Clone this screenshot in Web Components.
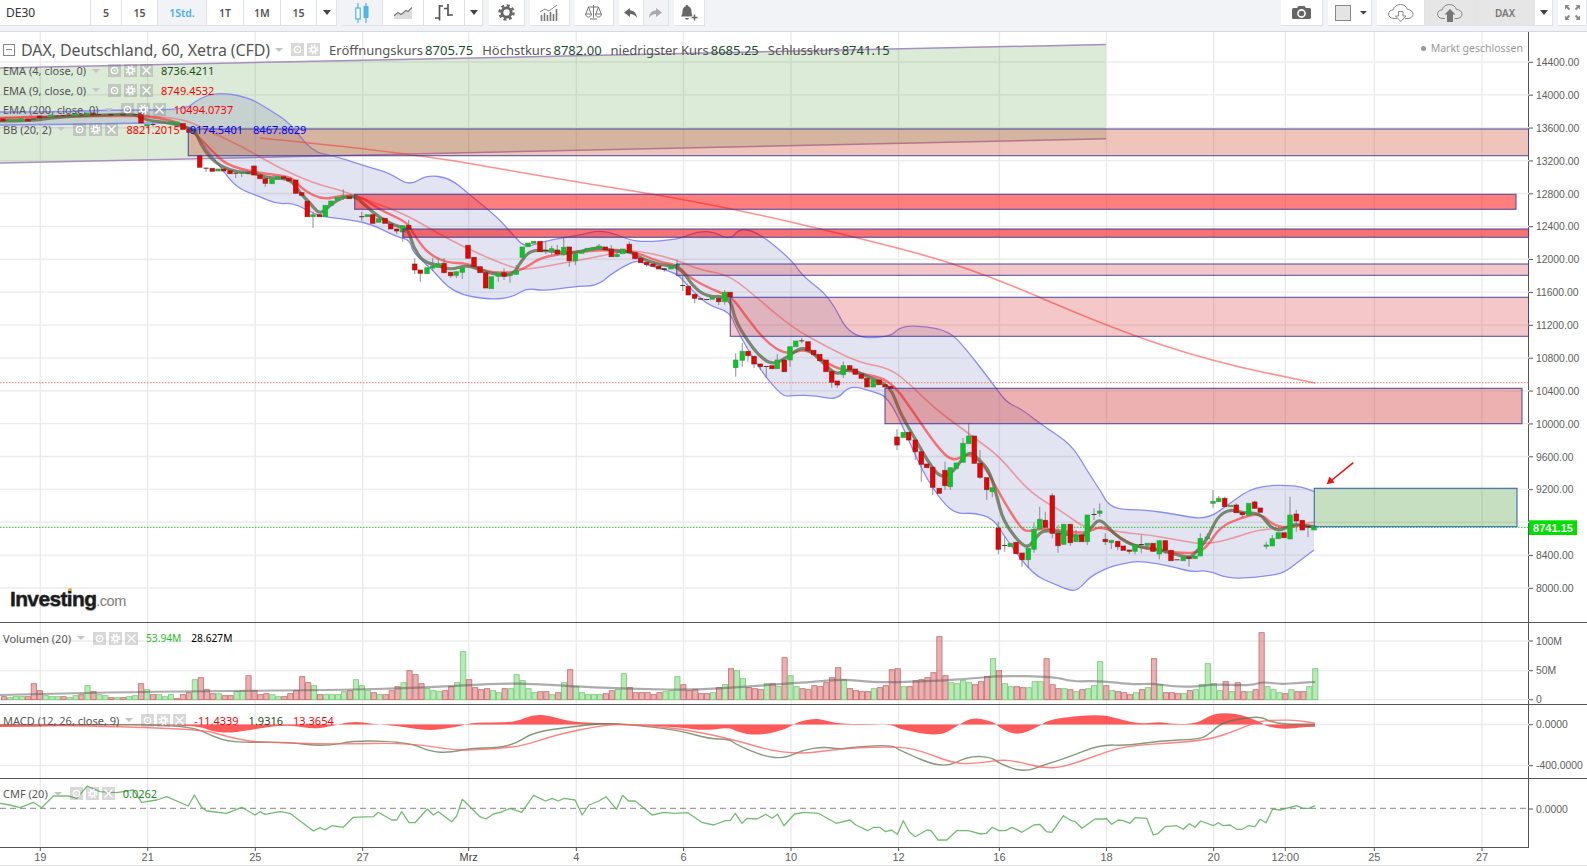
<!DOCTYPE html>
<html lang="de">
<head>
<meta charset="utf-8">
<title>DAX Chart</title>
<style>
  html, body { margin: 0; padding: 0; background: #fff; overflow: hidden; }
  body { width: 1587px; height: 866px; font-family: "Noto Sans", "DejaVu Sans", sans-serif; }
  svg.i { display: block; }
</style>
</head>
<body>
<chart-app>
  <chart-toolbar>
    <tool-group>
      <tool-btn style="--w:91px;--align:flex-start;--pad:0 0 0 6px;--fw:400;--fs:12px;--col:#333">DE30</tool-btn>
      <tool-btn style="--w:31px">5</tool-btn>
      <tool-btn style="--w:36px">15</tool-btn>
      <tool-btn style="--w:49px;--col:#45b0e8;--bg:#f1f3f6">1Std.</tool-btn>
      <tool-btn style="--w:37px">1T</tool-btn>
      <tool-btn style="--w:37px">1M</tool-btn>
      <tool-btn style="--w:36px">15</tool-btn>
      <tool-btn style="--w:20px"><svg class="i" width="8" height="5" viewBox="0 0 8 5"><path d="M0 0h8L4 5z" fill="#444"/></svg></tool-btn>
    </tool-group>
    <tool-group>
      <tool-btn style="--w:41px;--bg:#f1f3f6"><svg class="i" width="14" height="20" viewBox="0 0 14 20"><path d="M3 0v5M3 16v4M11 0v3M11 15v5" stroke="#4db5e8" stroke-width="1.2"/><rect x=".8" y="5" width="4.4" height="11" fill="#fff" stroke="#4db5e8" stroke-width="1.2"/><rect x="8.5" y="3" width="5" height="12" fill="#4db5e8"/></svg></tool-btn>
      <tool-btn style="--w:41px"><svg class="i" width="18" height="12" viewBox="0 0 18 12"><path d="M0 10 4 6l3 2 5-4 2 1 4-4v11H0z" fill="#dcdcdc"/><path d="M0 9 4 5.5l3 2 5-4 2 1 4-4" fill="none" stroke="#777" stroke-width="1.2"/></svg></tool-btn>
      <tool-btn style="--w:41px"><svg class="i" width="18" height="17" viewBox="0 0 18 17"><path d="M4.5 1v15.5M0 14h4.5M4.5 2H8M13 0v12M9 4.5h4M13 11h5" fill="none" stroke="#555" stroke-width="1.7"/></svg></tool-btn>
      <tool-btn style="--w:18px"><svg class="i" width="8" height="5" viewBox="0 0 8 5"><path d="M0 0h8L4 5z" fill="#444"/></svg></tool-btn>
    </tool-group>
    <tool-group style="--gap:5.5px">
      <tool-btn style="--w:36px"><svg class="i" width="17" height="17" viewBox="0 0 17 17"><circle cx="8.5" cy="8.5" r="4.6" fill="none" stroke="#666" stroke-width="2.8"/><circle cx="8.5" cy="8.5" r="7" fill="none" stroke="#666" stroke-width="2.5" stroke-dasharray="2.9 2.6"/></svg></tool-btn>
    </tool-group>
    <tool-group>
      <tool-btn style="--w:40px"><svg class="i" width="18" height="16" viewBox="0 0 18 16"><path d="M1.5 16V10M4.5 16V8M7.5 16V10M10.5 16V7M13.5 16V9M16.5 16V4" stroke="#777" stroke-width="1.6"/><path d="M0 7l5-3 4 2 8-6" fill="none" stroke="#888" stroke-width="1"/></svg></tool-btn>
    </tool-group>
    <tool-group>
      <tool-btn style="--w:39px"><svg class="i" width="17" height="15" viewBox="0 0 17 15"><path d="M8.5 0v13M5 14h7M3.5 2h10M3.5 2 .8 9M3.5 2 6.2 9M13.5 2l-2.7 7M13.5 2l2.7 7M.5 9c.5 4 5.5 4 6 0zM10.5 9c.5 4 5.5 4 6 0z" fill="none" stroke="#777" stroke-width="1"/></svg></tool-btn>
    </tool-group>
    <tool-group>
      <tool-btn style="--w:25px"><svg class="i" width="13" height="10" viewBox="0 0 13 10"><path d="M6 0 0 4.5 6 9V6c3 0 5 1 7 4-.5-5-3-7.5-7-7.5z" fill="#666"/></svg></tool-btn>
      <tool-btn style="--w:25px;--bg:#f1f3f6"><svg class="i" width="13" height="10" viewBox="0 0 13 10"><path d="M7 0l6 4.5L7 9V6c-3 0-5 1-7 4 .5-5 3-7.5 7-7.5z" fill="#aaa"/></svg></tool-btn>
    </tool-group>
    <tool-group style="--gap:5.5px">
      <tool-btn style="--w:31px"><svg class="i" width="17" height="16" viewBox="0 0 17 16"><path d="M6 0c.9 0 1.3.6 1.3 1.3C9.5 2 10.5 4 10.5 6.5c0 2 .5 3.5 1.5 5H0c1-1.5 1.5-3 1.5-5C1.5 4 2.5 2 4.7 1.3 4.7.6 5.1 0 6 0zM4 13h4C7.500 15 4.500 15 4 13z" fill="#666"/><path d="M13.500 9.500v6M10.500 12.500h6" stroke="#fff" stroke-width="3.400"/><path d="M13.500 9.500v6M10.500 12.500h6" stroke="#666" stroke-width="1.500"/></svg></tool-btn>
    </tool-group>

    <tool-group style="margin-left:auto">
      <tool-btn style="--w:42px"><svg class="i" width="19" height="13" viewBox="0 0 19 13"><path d="M1.500 2H5L6.500 0h6L14 2h3.500A1.500 1.500 0 0 1 19 3.500v8A1.500 1.500 0 0 1 17.500 13h-16A1.500 1.500 0 0 1 0 11.500v-8A1.500 1.500 0 0 1 1.500 2z" fill="#666"/><circle cx="9.5" cy="7.5" r="3.600" fill="none" stroke="#fff" stroke-width="1.600"/></svg></tool-btn>
    </tool-group>
    <tool-group>
      <tool-btn style="--w:44.5px;--align:flex-start;--pad:0 0 0 7px"><svg class="i" width="34" height="16" viewBox="0 0 34 16"><rect x=".5" y=".5" width="15" height="15" fill="#e4e4e4" stroke="#888"/><path d="M25 6h7l-3.500 3.500z" fill="#444"/></svg></tool-btn>
    </tool-group>
    <tool-group>
      <tool-btn style="--w:47.5px"><svg class="i" width="26" height="18" viewBox="0 0 26 18"><path d="M6 14.500C2.500 14.500 .5 12.500.5 10s2-4 4.500-4C6 2.500 9 .5 12.500.5c3.500 0 6 2 7 5 3 0 5.500 2 5.500 4.500s-2 4.500-5 4.500h-3M9 14.500H6" fill="none" stroke="#888" stroke-width="1"/><path d="M10.500 7.500h4.500v4.500H18l-5.200 5.500L7.500 12h3z" fill="#fff" stroke="#888" stroke-width="1"/></svg></tool-btn>
      <tool-btn style="--w:51.5px;--bg:#e6e6e6"><svg class="i" width="26" height="18" viewBox="0 0 26 18"><path d="M8 14.500H6C2.500 14.500.5 12.500.5 10s2-4 4.500-4C6 2.500 9 .5 12.500.5c3.500 0 6 2 7 5 3 0 5.500 2 5.500 4.500s-2 4.500-5 4.500h-2.500" fill="none" stroke="#888" stroke-width="1"/><path d="M13 5l5.500 5.500H16V18H10v-7.500H7.500z" fill="#777"/></svg></tool-btn>
      <tool-btn style="--w:58.5px;--bg:#e6e6e6;--col:#777;--fs:10px">DAX</tool-btn>
      <tool-btn style="--w:18.5px"><svg class="i" width="8" height="5" viewBox="0 0 8 5"><path d="M0 0h8L4 5z" fill="#444"/></svg></tool-btn>
    </tool-group>
    <tool-group>
      <tool-btn style="--w:28.7px"><svg class="i" width="17" height="17" viewBox="0 0 17 17"><path d="M1 1h4.500L4 2.500 6.200 4.700 4.700 6.200 2.500 4 1 5.500zM16 1v4.500L14.500 4l-2.200 2.200-1.500-1.500L13 2.500 11.500 1zM1 16v-4.500L2.500 13l2.200-2.200 1.500 1.500L4 14.500 5.500 16zM16 16h-4.500l1.500-1.500-2.200-2.200 1.500-1.500 2.200 2.200 1.500-1.500z" fill="#8a8a8a"/></svg></tool-btn>
    </tool-group>
  </chart-toolbar>

  <chart-pane kind="main" top="32" h="590">
    <div slot="legend">
      <legend-title icons="2" name="DAX, Deutschland, 60, Xetra (CFD)">
        <span>Eröffnungskurs<b>8705.75</b></span>
        <span>Höchstkurs<b>8782.00</b></span>
        <span>niedrigster Kurs<b>8685.25</b></span>
        <span>Schlusskurs<b>8741.15</b></span>
      </legend-title>
      <legend-row name="EMA (4, close, 0)"><legend-val c="#1d4d16">8736.4211</legend-val></legend-row>
      <legend-row name="EMA (9, close, 0)"><legend-val c="#f00">8749.4532</legend-val></legend-row>
      <legend-row name="EMA (200, close, 0)"><legend-val c="#f00">10494.0737</legend-val></legend-row>
      <legend-row name="BB (20, 2)"><legend-val c="#f00">8821.2015</legend-val><legend-val c="#00f">9174.5401</legend-val><legend-val c="#00f">8467.8629</legend-val></legend-row>
    </div>
    <market-status slot="status">Markt geschlossen</market-status>
    <site-logo slot="logo"></site-logo>
  </chart-pane>

  <chart-pane kind="volume" top="622" h="82" rule>
    <div slot="legend"><legend-row name="Volumen (20)" style="--rt:6.5px"><legend-val c="#1fc01f" style="font-size:10.2px">53.94M</legend-val><legend-val c="#000" style="font-size:10.2px">28.627M</legend-val></legend-row></div>
  </chart-pane>
  <chart-pane kind="macd" top="704" h="74" rule>
    <div slot="legend"><legend-row name="MACD (12, 26, close, 9)" style="--rt:6.5px"><legend-val c="#f00">-11.4339</legend-val><legend-val c="#1d4d16">1.9316</legend-val><legend-val c="#f00">13.3654</legend-val></legend-row></div>
  </chart-pane>
  <chart-pane kind="cmf" top="778" h="69" rule>
    <div slot="legend"><legend-row name="CMF (20)" style="--rt:6px"><legend-val c="#1b8a1b">0.0262</legend-val></legend-row></div>
  </chart-pane>
  <time-axis></time-axis>
</chart-app>

<script>
// x positions of the vertical grid, and their labels on the time axis
const GRID = [[40.3,'19'],[147.7,'21'],[255.3,'25'],[362.7,'27'],[468.7,'Mrz'],[576.3,'4'],[683.5,'6'],[791,'10'],[898.6,'12'],[999.4,'16'],[1106.5,'18'],[1213.7,'20'],[1285.3,'12:00'],[1374.3,'25'],[1482,'27']];
const PLOT_W = 1529;

// candles: x, body top, body bottom, wick top, wick bottom, colour (all in page pixels)
const CANDLES = [
[3,119,121,0,0,'r'],[9,119.5,121,0,0,'g'],[15,119.5,120.5,0,0,'g'],[21,118.7,120.7,0,0,'g'],[28,119,121,0,0,'r'],[33.5,118.5,119.5,0,0,'d'],[39.5,116,118,0,0,'r'],[45,116.5,117.5,0,0,'d'],[51,115,117,0,0,'g'],[57,115.5,116.5,0,0,'d'],[63,115,116,0,0,'d'],[69,114.5,115.5,0,0,'d'],[75,113.5,115.5,0,0,'g'],[81,114.5,115,0,0,'d'],[87,113,115,0,0,'g'],[93,113,115,0,0,'r'],[99,114,115,0,0,'d'],[111,114,115.5,0,0,'d'],[123,114,115.5,0,0,'d'],[135,114,115,0,0,'d'],[141,113,123,0,0,'r'],[147,124.5,126,0,0,'g'],[153,124,125,122,127,'d'],[171,121.5,123.5,0,0,'g'],[177,122,124,0,0,'g'],[183,123.5,129.5,0,0,'r'],[189,129.5,132.5,0,0,'r'],[195,130,133,0,0,'g'],
[199.7,155.7,167.3,0,0,'r'],[206,167.7,168.3,0,172,'d'],[212.3,168.3,171.3,0,0,'r'],[218,169,171,0,0,'g'],[223.7,169,171,0,0,'r'],[230,170.7,173.7,0,0,'r'],[235.7,172.7,173.3,0,178,'d'],[241.7,172.7,173.3,0,177,'g'],[248,172.5,173.3,0,0,'d'],[254,166,175,0,0,'r'],[260,175,178.7,0,0,'r'],[265.3,178.7,183.3,0,186.7,'r'],[272,179.3,183.7,0,0,'g'],[277.7,176.7,179.3,0,0,'g'],[283.7,176.7,178.7,0,0,'r'],[289,178.3,181,0,0,'r'],[295.7,180,193.3,0,0,'r'],[301.7,192.7,195.3,0,0,'r'],[307.3,201.3,216.7,0,0,'r'],[313,214.7,216.7,211.7,228,'g'],[319.3,214.7,216.7,0,0,'r'],[325.3,205.3,216.7,0,0,'g'],[331,201,205.3,0,0,'g'],[337.3,197.3,200,0,0,'g'],[343.3,196.3,198,189.3,200,'g'],[349.3,196.7,198.7,0,0,'r'],[355,195.3,197.3,0,0,'g'],[361.7,216.2,217,211.7,220.7,'d'],[367.3,214.7,216.7,0,0,'g'],[372.7,214.7,223.3,0,0,'r'],[378.7,218.7,222.3,0,0,'g'],[385,218.3,223.3,0,0,'r'],[390.7,224,229,0,0,'r'],[396.7,229,231,0,234,'r'],[402.7,225.7,232,0,241.7,'g'],[408.7,225.3,229,220,0,'r'],
[414.7,264,270,258.3,274,'r'],[420.3,270,273.3,0,281.7,'r'],[427,267.7,273.7,0,0,'g'],[432.7,266,268,258,271,'g'],[438.3,263.7,267.3,258,0,'g'],[444,263.3,272.7,258,0,'r'],[450.7,272.3,275.7,0,278,'r'],[456.3,271.7,275.3,0,278,'g'],[462.3,268,272.3,0,279,'g'],[468,245.3,258.3,0,0,'r'],[474,257.3,266.7,0,268.3,'r'],[480,266.7,272.7,0,0,'r'],[485.7,272.7,288,0,0,'r'],[491.3,276.7,288.7,0,0,'g'],[498.3,273,276.3,0,281.7,'g'],[504,272.7,276.3,268.3,280,'r'],[510,274,275.7,0,282.7,'g'],[516.3,270.7,274.3,265,0,'g'],[522.3,247,257.3,0,0,'g'],[528,243,246.7,0,0,'g'],[533.7,241.3,243.3,0,0,'g'],[540,241.3,251.7,0,0,'r'],[545.7,250,251,241.7,254,'d'],[551.7,248.7,251.7,245.7,255,'g'],[557.3,250,254,245,255.7,'r'],[563.7,247.3,254.7,237.7,255.7,'g'],[569.3,247,260.7,0,266.7,'r'],[575.3,253.7,260.7,0,265,'g'],[581.7,251,253.3,0,0,'g'],[587.3,248.3,251,0,0,'g'],[593.3,247.7,249.7,0,0,'g'],[599,246,248.3,244,0,'g'],[605.3,247,249.7,0,0,'r'],[611.3,249,256.7,245,0,'r'],[617,254.3,256.7,250,0,'g'],[622.7,249,253.7,0,0,'g'],[629.3,244.3,252.7,241.7,0,'r'],[635,252.7,258.7,0,0,'r'],[640.7,258.3,262.7,0,0,'r'],[646.7,262.3,264.7,0,266.7,'r'],[653,264,266.3,0,0,'r'],[658.7,266,269,0,0,'r'],[664.3,268.3,270,0,271.7,'d'],[671,266.3,269,0,0,'g'],[677,264.3,266.3,260,0,'g'],
[682.7,285,286,275,291,'d'],[688.3,286.3,295,0,0,'r'],[694.7,294.3,298.3,0,303.3,'r'],[700.7,298.3,299.7,0,0,'d'],[706.7,299,299.7,0,0,'d'],[712.3,297.3,299.3,0,0,'g'],[718.7,298.3,301.7,0,305,'r'],[724.7,292.3,301.7,290,304.7,'g'],[730,292.3,297,0,0,'r'],
[735.7,360,367.7,353.3,376.7,'g'],[742.3,351.3,360.3,343,366.7,'g'],[748,351.3,355.7,0,361.7,'r'],[754,356.3,364,0,368,'r'],[760.3,364,366.7,0,370,'r'],[766.3,366,366.7,0,378,'d'],[772,365.7,368.7,0,0,'r'],[777.3,360,368.7,354,0,'g'],[784.3,360,371.7,356.7,0,'r'],[790,346.7,360,0,366.7,'g'],[795.7,341,346.7,0,0,'g'],[801.7,340.3,341,338,343.3,'d'],[808,341.7,350.7,0,0,'r'],[813.7,350.3,354.7,0,0,'r'],[819.7,354.3,360.7,0,0,'r'],[826,360,371.7,0,0,'r'],[831.7,371.3,382.3,0,387.7,'r'],[837.3,381,385,0,388,'r'],[843.3,365.7,374.7,361.7,378,'g'],[849.7,365.7,369.7,0,0,'r'],[855.3,369,374.3,0,0,'r'],[861.3,374.3,378.3,0,0,'r'],[867,378.3,387,0,0,'r'],[873.3,380,387,0,0,'g'],[879,380,384.7,0,0,'r'],[885,384.7,387,0,0,'r'],[890.7,386.3,388.3,0,0,'r'],
[897,437,445,429.3,450,'r'],[903.3,432.3,437.7,0,0,'g'],[908.7,432.3,440,0,0,'r'],[915.3,440,451.7,0,460,'r'],[921.3,451.7,464.3,0,481.7,'r'],[926.7,464,467.7,0,0,'r'],[932.7,467.3,487.3,0,495,'r'],[939.3,488.3,493.3,0,0,'r'],[945,470.3,485.7,461.7,490,'r'],[950.3,467.7,486.7,0,490,'g'],[956.3,463,468.3,0,0,'g'],[963,443.3,462.3,438,0,'g'],[968.7,436,443.7,423.3,0,'g'],[974.3,436,463.3,0,0,'r'],[980,463.3,477.3,450,479,'r'],[986.7,477.7,489.7,0,500,'r'],[992.3,487.7,491.7,0,497.3,'g'],
[998.3,528,549.3,521.7,554.3,'r'],[1004.7,545,545.7,536.7,551.7,'d'],[1010.3,543.3,546.7,0,0,'g'],[1016,542.3,553.7,0,0,'r'],[1022,553,559.7,0,566.7,'r'],[1028.3,548.3,559.7,0,568.3,'g'],[1034,529.3,549.3,522.7,552.7,'g'],[1039.7,519.3,529,506.7,0,'g'],[1045.3,520.3,527.3,511.7,0,'r'],[1052.3,495.7,533.3,493.3,538.3,'r'],[1058,533.3,545.7,525,552.7,'r'],[1063.7,524.3,544.3,0,545,'g'],[1070.3,524.3,542.7,0,546,'r'],[1076,535,541.7,530,0,'g'],[1081.7,535,541.7,0,0,'r'],[1087.3,515,541.7,0,545,'g'],[1094,514,514.7,508.3,520,'d'],[1099.7,511,513.3,503.3,516.7,'g'],[1105.3,539.3,541.7,533.3,545,'r'],[1111.3,540.3,542.7,0,549,'g'],[1117.7,541.3,546.7,0,550,'r'],[1123.3,546,550.3,0,0,'r'],[1129.3,550,551.3,0,554,'r'],[1135,544.7,551.3,0,554.3,'g'],[1141.3,544,545,535,553.3,'d'],[1147.3,543.3,545.3,0,550,'g'],[1153,543.3,551.3,0,0,'r'],[1159.3,540.7,554,0,559.3,'g'],[1165.3,540.7,550.3,0,554,'r'],[1171,550.3,560.7,0,0,'r'],[1177,559.3,560,0,0,'d'],[1183.3,557,560.7,0,0,'g'],[1189,557,558.7,0,566.7,'r'],[1195,556,558.7,0,0,'g'],[1200.3,538.5,556,533.3,0,'g'],[1207.3,537,538.7,533.3,0,'g'],
[1213,501.3,503.3,490,507.7,'g'],[1218.7,498.3,501.7,496,0,'g'],[1224.7,498.3,506.7,496.7,0,'r'],[1230.7,505.3,506.7,0,0,'g'],[1236.3,505,512.7,503.3,0,'r'],[1242.3,512.7,514.7,0,518,'r'],[1248.7,503.3,515.3,0,0,'g'],[1254.7,502,508.3,500.7,0,'r'],[1260.3,508,512.3,0,0,'r'],[1266.3,545,546.3,541.7,549.3,'g'],[1272.3,538.7,546,535,0,'g'],[1278.3,532.7,538.7,0,0,'g'],[1284,532.7,537.7,0,0,'r'],[1290,515,539,496.7,0,'g'],[1296.3,514,521,510,531.7,'r'],[1302.3,520.3,530,0,0,'r'],[1308,526,527.5,0,537,'d'],[1314,526,530,0,0,'g']
];

const UPPER = [[0,112],[60,112],[110,110],[185,110],[197,100],[216,92],[248,97],[270,110],[290,123],[311.7,151.7],[336.7,156.7],[366.7,166.7],[390,173],[409,186],[426.7,175],[450,178],[470,195],[496.7,216.7],[513,235],[525,247.7],[543,241.7],[563,237.7],[580,235],[598,230.7],[613,233],[632,241],[650,241.7],[670,240],[683,237.7],[697,231.7],[713,231.7],[730,240],[740,228],[759,233],[791.7,260],[803,276.7],[830,296.7],[850,338],[890,337.3],[900,326.7],[923,325.7],[950,331.7],[966.7,350],[990,380],[1006.7,403],[1020,408],[1042,425],[1072,445],[1086.7,470],[1100,490],[1111,509.3],[1146.7,510],[1173,514],[1206.7,520],[1230,503.3],[1255,485.7],[1296.7,485],[1314.3,491.7]];
const LOWER = [[0,125],[100,124],[185,122],[200,140],[220,166.7],[236.7,188],[260,196.7],[276.7,204],[293,203],[313,213],[323,216.7],[353,220],[373,225],[396.7,236.7],[410,240],[413,253],[433,270],[453,293],[490,300],[513,297],[527,288],[543,291],[573,286.7],[597,285.7],[610,275],[623,266.7],[637,260],[647,265],[677,273],[687,285],[707,305],[730,311.7],[736.7,330],[760,370],[783,397.3],[793,395],[816.7,395.7],[836.7,400],[850,385],[873,391.7],[886.7,396.7],[900,420],[923,473],[943,503],[956.7,514],[973,512.7],[993,518],[1006.7,540],[1033,575],[1056.7,585],[1073,591.7],[1081.7,586.7],[1090,576.7],[1110,566.7],[1126.7,563],[1140,560.7],[1173,566.7],[1193,572.3],[1206.7,570],[1230,579.3],[1266.7,576],[1283,573.3],[1296.7,563.3],[1314,550]];
const EMA4 = [[0,121],[30,121],[60,117],[100,115],[135,114],[145,120],[170,123],[185,127],[195,130],[200,143],[210,158],[222,167],[237,172],[254,172.7],[267,178],[280,177.7],[292,181],[300,193],[310,203],[320,215],[330,205],[343,197],[355,196],[367,207],[380,218],[397,226.7],[408,228],[413,246.7],[423,261.7],[437,265],[450,270],[467,265],[480,270],[497,275],[513,275],[520,263],[530,250],[550,251],[567,253],[580,251.7],[600,247],[613,251.7],[630,251],[640,258],[660,265],[680,266.7],[693,286.7],[707,296.7],[730,296.7],[735,320],[747,340],[760,356.7],[773,365],[788,356.7],[800,347.7],[810,350],[827,366.7],[837,375],[850,368],[867,376.7],[890,385],[900,413],[913,435],[927,460],[940,478],[953,473],[968,450],[980,460],[990,472],[997,497],[1003,520],[1017,540],[1027,548],[1033,541.7],[1042,530],[1057,531.7],[1070,535],[1083,536.7],[1092,526.7],[1100,518],[1113,533],[1127,543],[1140,547],[1153,548],[1170,553],[1190,558],[1195,553],[1207,540],[1217,517],[1230,509],[1243,513],[1260,513],[1270,527],[1280,530.7],[1287,527],[1295,524],[1307,526],[1314,527]];
const EMA9 = [[0,118],[60,116],[135,115],[160,118],[180,123],[197,135],[213,152],[227,165],[253,172],[277,175],[293,178],[303,190],[323,200],[343,195],[360,196],[380,210],[407,222],[413,233],[427,253],[447,263],[467,263],[487,272],[513,273],[527,267],[540,258],[560,254],[600,250],[630,250],[660,262],[677,265],[690,278],[713,290],[732,297],[747,318],[767,343],[787,355],[807,348],[833,368],[860,373],[890,380],[910,407],[937,447],[953,462],[967,453],[983,463],[1003,500],[1020,527],[1027,532],[1043,528],[1070,532],[1087,533],[1103,525],[1120,538],[1140,548],[1157,550],[1177,553],[1197,553],[1207,547],[1220,527],[1240,518],[1260,513],[1273,525],[1287,528],[1300,525],[1314,526]];
const MID = [[0,118],[120,116],[180,117],[213,133],[243,147],[277,167],[313,183],[340,190],[367,200],[407,215],[437,233],[470,250],[510,267],[527,270],[563,263],[597,257],[627,250],[650,253],[677,260],[700,270],[730,275],[763,303],[793,328],[827,347],[860,363],[890,368],[913,387],[933,407],[957,425],[980,442],[1000,457],[1030,493],[1063,512],[1083,527],[1097,528],[1127,533],[1150,535],[1177,540],[1207,545],[1237,537],[1257,530],[1283,528],[1314,522]];
const EMA200 = [[260,138],[405,152],[546,177],[708,203],[860,238],[972,268],[1113,329],[1214,362],[1315,383]];

// volume: + green, - red, heights in px above the baseline
const VOL_A = [-3,2,3,3,-3,-16,-9,4,3,3,-3,2,4,-5,14,-8,5,4,-2,2,-2,3,4,-16,10,-5,5,3,5,-1,-5,-7,20,-22,-10,-6,6,-4,-4,8,9,-24,-9,-5,-6,5,3,-3,-6,-9,-23,-17,14,-5,5,5,5,8,-9,20,14,9,-7,5,-5,-9,-13,17,-29,-25,-16,11,9,8,-9,-13,17,48,-20,-12,-10,-11,9,7];
const VOL_B = [-11,11,25,19,11,7,-8,-8,5,-7,17,-30,13,7,5,5,5,-6,-9,10,26,-12,-7,-7,-7,-5,-7,8,9,23,-15,-9,-10,-6,-6,7,-12,15,-31,29,21,-12,-11,-10,16,-16,13,-42,24,13,-11,-10,-14,-13,-17,-22,-32,20,-11,-9,-8,-8,11,-12,-14,-30,-31,13,-13,-19,-20,-22,-27,-63,-24,17,16,19,17,-15,-18,-23,41,-29,16,13,-13,-12,12,18,18,-41,-15,-11,11,-10,8,-10,11,14,38];
const VOL_C = [-14,9,-8,-7,-5,7,-10,12,-41,15,-7,-7,-6,6,-9,10,15,36,16,9,-18,8,-17,-8,8,-10,-67,13,10,7,-6,10,-8,-8,13,31];
const VOL_AVG = [[0,695],[40,694],[130,692],[230,691],[330,690],[420,688],[500,683.3],[540,684],[579,686.7],[638,689],[698,690],[757,685.7],[816,681.7],[844,679],[876,682.7],[935,681],[975,678.3],[998,675.7],[1054,676.7],[1073,681.7],[1100,680.7],[1133,684.7],[1153,683.3],[1173,686.7],[1197,686.7],[1213,684],[1250,685.7],[1263,681.7],[1280,684.3],[1300,682.7],[1315,682]];

const HIST = [[0,727],[30,727],[90,725],[197,725],[213,732],[233,733],[267,727],[290,725],[313,729],[327,727],[353,721],[373,724],[400,726],[427,731],[457,727],[470,723],[500,722.3],[516,721.7],[533.6,714.3],[551,716],[571,721.7],[599,723],[626.5,724.3],[678,727.3],[705.6,730.7],[729,727.3],[737,732],[757,735.7],[785,730],[794.6,723.3],[812,718.3],[824,720],[840,724.3],[891.5,724],[899,729.3],[939,736.7],[958.7,725],[972.5,717],[994,721.7],[1000,728.3],[1018,735.7],[1038,726.7],[1050,719],[1097,714],[1117,718.3],[1137,724],[1160,721.7],[1173,724],[1197,724],[1213,713.3],[1237,713.3],[1260,721.7],[1267,726.7],[1285,729.3],[1300,727.3],[1315,726.7]];
const MACD = [[0,725],[133,724],[193,726.7],[213,736.7],[233,742.7],[287,741.7],[323,746.7],[358,740],[410,742.7],[430,751.7],[450,752.7],[470,748.3],[500,747.7],[516,743.3],[533.6,732.3],[571,726.7],[603,723.3],[626.5,724.3],[678,730],[709.6,739],[729,739],[737,745],[765,756.7],[785,758.3],[802.5,750],[824,746.7],[840,749.3],[856,746.7],[891.5,745],[899,750],[943,769],[968.6,756],[992,757.3],[1000,764],[1024,772.3],[1045.7,764.3],[1065.4,758.3],[1101,744.5],[1127,745.7],[1160,740.7],[1197,739.3],[1207,736],[1220,724],[1233,720],[1260,716],[1270,721.7],[1285,724.3],[1315,724.3]];
const SIGNAL = [[0,725],[193,726.7],[233,738.3],[257,742.3],[333,744.3],[410,742.7],[457,751],[500,748.3],[523.7,745.7],[555,735],[603,725],[630.5,724.3],[678,728.3],[729,738.3],[788.6,755.7],[848,747.7],[899,746.7],[919,750],[955,764],[978.5,763.3],[1000,760],[1014,760.7],[1041.7,767.7],[1061.5,767.7],[1100,754.3],[1117,748.3],[1140,745],[1167,743.3],[1193,741.3],[1213,738.3],[1233,731.7],[1260,720.7],[1280,720],[1297,720.3],[1315,723.3]];

// the CMF line came from three crops with different scales
const CMF = [].concat(
  [[0,700],[30,705],[60,713],[100,697],[125,713],[160,678],[205,678],[230,685],[262,648],[300,665],[350,668],[400,660],[425,697],[470,690],[500,680],[565,708],[583,675],[605,712],[620,723],[680,730],[725,712],[765,735],[780,725],[795,733],[840,725],[870,730],[940,783],[960,773],[975,780],[995,767],[1030,772],[1060,742],[1120,740],[1135,727],[1175,750],[1190,750],[1205,725],[1227,758],[1245,758],[1282,717],[1300,735],[1315,725],[1355,755],[1370,738],[1387,688],[1440,740],[1458,747],[1480,732],[1500,727]].map(p => [p[0]/3, 570+p[1]/3]),
  [[0,593],[25,580],[55,592],[85,541],[115,558],[132,550],[147,558],[162,550],[190,555],[208,600],[225,570],[250,558],[268,545],[295,583],[310,541],[325,558],[342,558],[385,600],[415,592],[440,595],[475,593],[510,622],[540,630],[570,617],[582,617],[595,595],[612,625],[625,610],[650,612],[672,598],[688,610],[702,598],[718,632],[745,597],[770,592],[805,595],[850,625],[885,615],[900,630],[930,647],[945,637],[960,637],[975,650],[990,645],[1005,658],[1020,617],[1035,650],[1050,665],[1080,645],[1090,647],[1108,675],[1130,675],[1155,647],[1185,647],[1215,657],[1230,655],[1245,637],[1262,647],[1278,647],[1295,637],[1320,652],[1350,630],[1365,628],[1382,650],[1395,652],[1425,602],[1445,617],[1455,620],[1472,640],[1505,612]].map(p => [500+p[0]/2.529, 615+p[1]/3]),
  [[0,627],[20,627],[35,643],[55,630],[70,632],[90,640],[105,623],[140,625],[160,675],[175,670],[195,650],[230,647],[250,658],[268,641],[285,652],[302,633],[340,647],[355,638],[370,647],[390,645],[410,658],[427,658],[445,647],[465,650],[480,628],[498,638],[518,597],[540,600],[590,587],[608,595],[627,595],[645,587]].map(p => [1100+p[0]/3, 610+p[1]/3])
);

function pts(a) { return a.map(p => p[0].toFixed(1) + ',' + p[1].toFixed(1)).join(' '); }
function line(a, col, w) { return `<polyline points="${pts(a)}" fill="none" stroke="${col}" stroke-width="${w}" stroke-linejoin="round"/>`; }

// curve through the midpoints of a point list, the reference lines are rounded
function curve(a) {
  let d = `${a[0][0]} ${a[0][1]}`;
  for (let i = 1; i < a.length - 1; i++) {
    const mx = (a[i][0] + a[i+1][0]) / 2, my = (a[i][1] + a[i+1][1]) / 2;
    d += ` Q${a[i][0]} ${a[i][1]} ${mx.toFixed(1)} ${my.toFixed(1)}`;
  }
  const e = a[a.length-1];
  return d + ` L${e[0]} ${e[1]}`;
}
function soft(a, col, w) { return `<path d="M${curve(a)}" fill="none" stroke="${col}" stroke-width="${w}" stroke-linejoin="round"/>`; }
function zone(x, y, r, b, fill, st) { return `<rect x="${x}" y="${y}" width="${r-x}" height="${b-y}" fill="${fill}" stroke="${st}" stroke-width="1.1"/>`; }

function grid(top, h, rows) {
  let s = '';
  GRID.forEach(g => s += `<line x1="${g[0]}" x2="${g[0]}" y1="${top}" y2="${top+h}" stroke="#ebebeb" stroke-width="1.4"/>`);
  rows.forEach(y => s += `<line x1="0" x2="${PLOT_W}" y1="${y}" y2="${y}" stroke="#ececec" stroke-width="1.3"/>`);
  return s;
}

function candle(c) {
  let [x, t, b, wt, wb, k] = c, s = '';
  if (wt || wb) s += `<line x1="${x}" x2="${x}" y1="${wt||t}" y2="${wb||b}" stroke="#777" stroke-opacity=".75" stroke-width="1.1"/>`;
  if (k == 'd') return s + `<rect x="${x-2.5}" y="${t}" width="5" height="${Math.max(b-t,1)}" fill="#5a3030"/>`;
  let f = k == 'r' ? '#f00000' : '#00cc20', st = k == 'r' ? '#7a2020' : '#3f8f4f';
  return s + `<rect x="${x-2.3}" y="${t}" width="4.6" height="${b-t}" fill="${f}" stroke="${st}" stroke-opacity=".75" stroke-width=".8"/>`;
}

function bars(arr, x0, x1) {
  const step = (x1 - x0) / (arr.length - 1), base = 699.7;
  return arr.map((v, i) => {
    const h = Math.abs(v), x = x0 + i * step - 2.6;
    return v > 0
      ? `<rect x="${x.toFixed(1)}" y="${base-h}" width="5.2" height="${h}" fill="rgba(80,205,80,.42)" stroke="#73c973" stroke-width=".8"/>`
      : `<rect x="${x.toFixed(1)}" y="${base-h}" width="5.2" height="${h}" fill="rgba(200,60,60,.4)" stroke="#c76a6a" stroke-width=".8"/>`;
  }).join('');
}

// what each pane draws: all in page pixels, the pane's viewBox does the rest
const PAINT = {
  main(top, h) {
    const rows = [];
    for (let k = 0; k <= 16; k++) rows.push(62 + k * 32.875);
    let s = grid(top, h, rows);
    s += `<polygon points="0,68 1106,44.5 1106,138.7 0,163" fill="rgba(60,140,40,.18)"/>`;
    s += `<line x1="0" y1="68" x2="1106" y2="44.5" stroke="#a98fbe" stroke-width="1.5"/><line x1="0" y1="163" x2="1106" y2="138.7" stroke="#a98fbe" stroke-width="1.5"/>`;
    s += `<path d="M${curve(UPPER)} L${curve(LOWER.slice().reverse())} Z" fill="rgba(80,85,170,.16)"/>`;
    s += soft(UPPER, '#8a8cf2', 1.3) + soft(LOWER, '#8a8cf2', 1.3);
    s += `<line x1="0" x2="${PLOT_W}" y1="382.7" y2="382.7" stroke="#ff7070" stroke-width="1" stroke-dasharray="1.5 1.5"/>`;
    s += `<line x1="0" x2="${PLOT_W}" y1="527.3" y2="527.3" stroke="#19c419" stroke-width="1" stroke-dasharray="1.5 1.5"/>`;
    s += soft(EMA200, 'rgba(255,85,85,.65)', 1.6) + soft(MID, 'rgba(240,80,80,.5)', 1.6) + soft(EMA9, 'rgba(255,40,40,.62)', 2.4) + soft(EMA4, 'rgba(85,105,65,.75)', 3.2);
    s += CANDLES.map(candle).join('');
    const navy = 'rgba(50,50,150,.8)', pink = 'rgba(215,50,50,.27)';
    s += zone(188.3, 129, PLOT_W, 155.7, 'rgba(200,60,30,.3)', navy);
    s += zone(354.7, 194.3, 1516, 209.3, 'rgba(255,0,0,.5)', navy);
    s += zone(403, 229, PLOT_W, 237.3, 'rgba(240,0,0,.55)', navy);
    s += zone(676.7, 264, PLOT_W, 275.3, pink, navy);
    s += zone(730.3, 297.3, PLOT_W, 336.3, pink, navy);
    s += zone(885, 388.3, 1522, 423.7, 'rgba(205,40,40,.36)', navy);
    s += zone(1314.3, 488.3, 1517, 526.7, 'rgba(70,150,50,.3)', '#3a68ad');
    s += `<line x1="1353.3" y1="462.7" x2="1332" y2="480" stroke="#f01010" stroke-width="1.6"/><path d="M1326.7 484.3 1329.5 476.5 1334.5 482.5z" fill="#f01010"/>`;
    return s;
  },
  volume(top, h) {
    let s = grid(top, h, [641, 670.7, 699.7]);
    s += bars(VOL_A, 4, 499) + bars(VOL_B, 504.7, 1100.2) + bars(VOL_C, 1106.3, 1315.3);
    s += soft(VOL_AVG, 'rgba(90,90,90,.5)', 2.2);
    return s;
  },
  macd(top, h) {
    let s = grid(top, h, [724.5, 765.7]);
    s += `<path d="M0 724.5 L${curve(HIST)} L1315 724.5Z" fill="rgba(255,0,0,.65)"/>`;
    s += soft(MACD, 'rgba(90,120,80,.75)', 1.4) + soft(SIGNAL, 'rgba(255,100,100,.8)', 1.4);
    return s;
  },
  cmf(top, h) {
    let s = grid(top, h, []);
    s += `<line x1="0" x2="${PLOT_W}" y1="808.3" y2="808.3" stroke="#888" stroke-width="1" stroke-dasharray="6 4"/>`;
    s += line(CMF, 'rgba(90,175,90,.85)', 1.3);
    return s;
  }
};

const AXIS = {
  main() {
    const a = [];
    // 8800.00 sits right behind the price tag, so it keeps only its tick
    for (let k = 0; k <= 16; k++) a.push([62.3 + k * 32.875, k == 14 ? '' : (14400 - k * 400).toFixed(2)]);
    return a;
  },
  volume() { return [[641, '100M'], [670.7, '50M'], [699.7, '0']]; },
  macd() { return [[724.7, '0.0000'], [765.7, '-400.0000']]; },
  cmf() { return [[809, '0.0000']]; }
};

class ChartApp extends HTMLElement {
  constructor() {
    super();
    this.attachShadow({ mode: 'open' });
    this.shadowRoot.innerHTML = `<style>:host{display:flex;flex-direction:column;width:1587px;height:866px;overflow:hidden}</style><slot></slot>`;
  }
}

class ChartToolbar extends HTMLElement {
  constructor() {
    super();
    this.attachShadow({ mode: 'open' });
    this.shadowRoot.innerHTML = `<style>
      :host{display:block;flex:none;height:32px;box-sizing:border-box;background:#f1f3f6;border-bottom:1px solid #d4d9df}
      .row{display:flex;height:26px}
      ::slotted(tool-group:first-child){margin-left:0}
    </style><div class="row"><slot></slot></div>`;
  }
}

class ToolGroup extends HTMLElement {
  constructor() {
    super();
    this.attachShadow({ mode: 'open' });
    this.shadowRoot.innerHTML = `<style>:host{display:flex;flex:none;margin-left:var(--gap,5px)}</style><slot></slot>`;
  }
}

class ToolBtn extends HTMLElement {
  constructor() {
    super();
    this.attachShadow({ mode: 'open' });
    this.shadowRoot.innerHTML = `<style>
      :host{display:flex;flex:none;box-sizing:border-box;width:var(--w,36px);height:26px;align-items:center;
        justify-content:var(--align,center);padding:var(--pad,0);background:var(--bg,#fff);color:var(--col,#555);
        border-right:1px solid #dfe3e8;border-bottom:1px solid #dfe3e8;
        font:var(--fw,600) var(--fs,10.5px) "Noto Sans","DejaVu Sans",sans-serif}
    </style><slot></slot>`;
  }
}

class ChartPane extends HTMLElement {
  constructor() {
    super();
    this.attachShadow({ mode: 'open' });
  }
  connectedCallback() {
    const kind = this.getAttribute('kind'), top = +this.getAttribute('top'), h = +this.getAttribute('h');
    const ticks = AXIS[kind]().map(t => `<line x1="0" x2="4" y1="${t[0]}" y2="${t[0]}" stroke="#555"/>` + (t[1] ? `<text class="lab" x="7" y="${t[0]+3.7}">${t[1]}</text>` : '')).join('');
    const tag = kind == 'main' ? `<rect x="0" y="520.3" width="48" height="14.7" fill="#00e000"/><text class="tag" x="24" y="531.5" text-anchor="middle">8741.15</text>` : '';
    this.shadowRoot.innerHTML = `<style>
      :host{display:grid;grid-template-columns:${PLOT_W}px 1fr;flex:none;height:${h}px;position:relative}
      :host([rule])::before{content:"";position:absolute;left:0;right:0;top:0;height:1px;background:#555;z-index:2}
      .plot{position:relative;height:${h}px;overflow:hidden}
      svg{display:block}
      .axis{border-left:1px solid #555;margin-left:-1px}
      .lab{font:10.4px "Liberation Sans",Arial,sans-serif;fill:#606060}
      .tag{font:700 11px "Liberation Sans",Arial,sans-serif;fill:#fff}
      .legend{position:absolute;left:0;top:0;right:0}
      .status{position:absolute;right:6px;top:9px}
      .logo{position:absolute;left:10px;bottom:11px}
    </style>
    <div class="plot">
      <svg width="${PLOT_W}" height="${h}" viewBox="0 ${top} ${PLOT_W} ${h}">${PAINT[kind](top, h)}</svg>
      <div class="legend"><slot name="legend"></slot></div>
      <div class="status"><slot name="status"></slot></div>
      <div class="logo"><slot name="logo"></slot></div>
    </div>
    <div class="axis"><svg width="58" height="${h}" viewBox="0 ${top} 58 ${h}">${ticks}${tag}</svg></div>`;
  }
}

class TimeAxis extends HTMLElement {
  constructor() {
    super();
    this.attachShadow({ mode: 'open' });
    let s = '';
    GRID.forEach(g => {
      const month = g[1] == 'Mrz';
      s += `<line x1="${g[0]}" x2="${g[0]}" y1="0" y2="3" stroke="#555"/><text x="${g[0]}" y="13.2" text-anchor="middle" font-weight="${month ? 700 : 400}" fill="${month ? '#444' : '#606060'}">${g[1]}</text>`;
    });
    this.shadowRoot.innerHTML = `<style>
      :host{display:block;flex:none;height:19px;position:relative}
      svg{display:block}
      .wrap{border-top:1px solid #555;width:${PLOT_W}px;box-sizing:border-box}
      text{font:11px "Liberation Sans",Arial,sans-serif}
      .foot{position:absolute;left:0;right:0;top:17.5px;height:1px;background:#e2e2e2}
    </style><div class="wrap"><svg width="${PLOT_W}" height="17">${s}</svg></div><div class="foot"></div>`;
  }
}

// the little grey eye / gear / close boxes next to every indicator name
function legendIcons(n) {
  const box = '<rect width="13" height="13" fill="rgba(110,110,110,.27)"/>';
  const eye = `<svg width="13" height="13" viewBox="0 0 13 13">${box}<circle cx="6.5" cy="6.5" r="3.2" fill="none" stroke="#fff" stroke-width="1.3"/><circle cx="6.5" cy="6.5" r="1" fill="#fff"/></svg>`;
  const gear = `<svg width="13" height="13" viewBox="0 0 13 13">${box}<circle cx="6.5" cy="6.5" r="2.4" fill="none" stroke="#fff" stroke-width="1.7"/><circle cx="6.5" cy="6.5" r="4.2" fill="none" stroke="#fff" stroke-width="1.5" stroke-dasharray="1.7 1.6"/></svg>`;
  const close = `<svg width="13" height="13" viewBox="0 0 13 13">${box}<path d="M2.5 2.5l8 8M10.5 2.5l-8 8" stroke="#fff" stroke-width="1.4"/></svg>`;
  return [eye, gear, close].slice(0, n).join('');
}
const CARET = '<svg width="8" height="4" viewBox="0 0 8 4"><path d="M0 0h8L4 4z" fill="#c4c4c4"/></svg>';

class LegendTitle extends HTMLElement {
  constructor() {
    super();
    this.attachShadow({ mode: 'open' });
  }
  connectedCallback() {
    this.shadowRoot.innerHTML = `<style>
      :host{display:flex;align-items:center;height:22.5px;margin-top:6.7px;padding-left:3px;color:#555;
        font:13px "Noto Sans","DejaVu Sans",sans-serif;white-space:nowrap}
      .box{width:12px;height:12px;box-sizing:border-box;border:1px solid #888;position:relative;margin-right:6px}
      .box::after{content:"";position:absolute;left:2px;right:2px;top:4.5px;height:1px;background:#888}
      .name{font-size:16px;letter-spacing:-.1px}
      .caret{margin:0 8px 0 5px;display:flex}
      .ic{display:flex;gap:3px;margin-right:9px}
      .vals{display:flex;gap:9px}
      ::slotted(span){color:#555}
    </style><span class="box"></span><span class="name">${this.getAttribute('name')}</span>
    <span class="caret">${CARET}</span><span class="ic">${legendIcons(+this.getAttribute('icons'))}</span>
    <span class="vals"><slot></slot></span>`;
  }
}

class LegendRow extends HTMLElement {
  constructor() {
    super();
    this.attachShadow({ mode: 'open' });
  }
  connectedCallback() {
    this.shadowRoot.innerHTML = `<style>
      :host{display:flex;align-items:center;height:19.4px;margin-top:var(--rt,0);padding-left:3px;color:#555;
        font:11px "Noto Sans","DejaVu Sans",sans-serif;white-space:nowrap}
      .caret{margin:0 8px 0 6px;display:flex}
      .ic{display:flex;gap:3px;margin-right:8px}
      .vals{display:flex;gap:10px;align-items:center}
    </style><span>${this.getAttribute('name')}</span><span class="caret">${CARET}</span>
    <span class="ic">${legendIcons(3)}</span><span class="vals"><slot></slot></span>`;
  }
}

class LegendVal extends HTMLElement {
  constructor() {
    super();
    this.attachShadow({ mode: 'open' });
  }
  connectedCallback() {
    this.shadowRoot.innerHTML = `<style>:host{display:inline-block;color:${this.getAttribute('c')}}</style><slot></slot>`;
  }
}

class MarketStatus extends HTMLElement {
  constructor() {
    super();
    this.attachShadow({ mode: 'open' });
    this.shadowRoot.innerHTML = `<style>
      :host{display:flex;align-items:center;gap:5px;color:#999;font:10.5px "Noto Sans","DejaVu Sans",sans-serif}
      i{width:5px;height:5px;border-radius:50%;background:#999}
    </style><i></i><slot></slot>`;
  }
}

class SiteLogo extends HTMLElement {
  constructor() {
    super();
    this.attachShadow({ mode: 'open' });
    this.shadowRoot.innerHTML = `<style>
      :host{display:block;position:relative;font:700 21px "Liberation Sans",Arial,sans-serif;letter-spacing:-.65px;color:#1c1c1c;white-space:nowrap;-webkit-text-stroke:.35px #1c1c1c;text-shadow:0 1px 1px rgba(0,0,0,.3)}
      span{font-weight:400;font-size:14.5px;color:#7c7c7c;letter-spacing:-.5px;text-shadow:none;-webkit-text-stroke:0}
      i{position:absolute;left:58px;top:1px;width:4px;height:3px;border-radius:50%;background:#f5a623}
    </style>Investing<span>.com</span><i></i>`;
  }
}

// values in the open/high/low/close legend are dark green
document.querySelectorAll('legend-title b').forEach(b => {
  b.style.cssText = 'font-weight:400;color:#1d4d2d;margin-left:2px';
});

customElements.define('chart-app', ChartApp);
customElements.define('chart-toolbar', ChartToolbar);
customElements.define('tool-group', ToolGroup);
customElements.define('tool-btn', ToolBtn);
customElements.define('chart-pane', ChartPane);
customElements.define('time-axis', TimeAxis);
customElements.define('legend-title', LegendTitle);
customElements.define('legend-row', LegendRow);
customElements.define('legend-val', LegendVal);
customElements.define('market-status', MarketStatus);
customElements.define('site-logo', SiteLogo);
</script>
</body>
</html>
